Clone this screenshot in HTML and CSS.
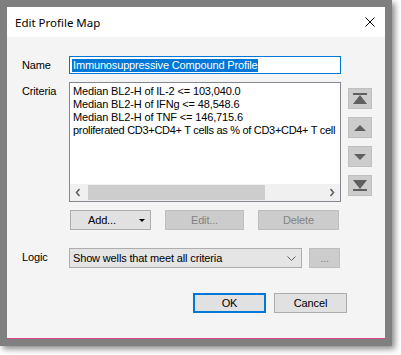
FILE: index.html
```html
<html lang="en">
<head>
    <meta charset="UTF-8">
    <meta name="viewport" content="width=device-width, initial-scale=1.0">
    <title>Edit Profile Map</title>
    <link rel="stylesheet" href="styles.css">
</head>
<body>
    <div class="frame">
        <div class="dialog">
            <div class="titlebar">
                <span class="title">Edit Profile Map</span>
                <svg class="close" width="10" height="10" viewBox="0 0 10 10">
                    <path d="M0.5 0.5 L9.5 9.5 M9.5 0.5 L0.5 9.5" stroke="#000" stroke-width="1" fill="none"/>
                </svg>
            </div>

            <div class="content">
                <div class="row row-name">
                    <span class="label">Name</span>
                    <div class="textbox">
                        <span class="selected">Immunosuppressive Compound Profile</span>
                    </div>
                </div>

                <div class="row row-criteria">
                    <span class="label">Criteria</span>
                    <div class="listbox">
                        <div class="items">
                            <div class="item">Median BL2-H of IL-2 &lt;= 103,040.0</div>
                            <div class="item">Median BL2-H of IFNg &lt;= 48,548.6</div>
                            <div class="item">Median BL2-H of TNF &lt;= 146,715.6</div>
                            <div class="item item-long">proliferated CD3+CD4+ T cells as % of CD3+CD4+ T cell</div>
                        </div>
                        <div class="hscroll">
                            <span class="sb-arrow">
                                <svg width="17" height="17" viewBox="0 0 17 17">
                                    <path d="M9.5 5 L6.5 8.5 L9.5 12" stroke="#606060" stroke-width="1.6" fill="none"/>
                                </svg>
                            </span>
                            <span class="sb-track"><span class="sb-thumb"></span></span>
                            <span class="sb-arrow">
                                <svg width="17" height="17" viewBox="0 0 17 17">
                                    <path d="M7.5 5 L10.5 8.5 L7.5 12" stroke="#606060" stroke-width="1.6" fill="none"/>
                                </svg>
                            </span>
                        </div>
                    </div>
                    <div class="move-buttons">
                        <button class="move-btn">
                            <svg width="14" height="11" viewBox="0 0 14 11">
                                <rect x="0" y="0" width="14" height="2" fill="#5f5f5f"/>
                                <path d="M7 2 L14 11 L0 11 Z" fill="#5f5f5f"/>
                            </svg>
                        </button>
                        <button class="move-btn">
                            <svg width="12" height="6" viewBox="0 0 12 6">
                                <path d="M6 0 L12 6 L0 6 Z" fill="#5f5f5f"/>
                            </svg>
                        </button>
                        <button class="move-btn">
                            <svg width="12" height="6" viewBox="0 0 12 6">
                                <path d="M0 0 L12 0 L6 6 Z" fill="#5f5f5f"/>
                            </svg>
                        </button>
                        <button class="move-btn">
                            <svg width="14" height="11" viewBox="0 0 14 11">
                                <path d="M0 0 L14 0 L7 9 Z" fill="#5f5f5f"/>
                                <rect x="0" y="9" width="14" height="2" fill="#5f5f5f"/>
                            </svg>
                        </button>
                    </div>
                </div>

                <div class="row row-actions">
                    <button class="btn btn-add">
                        <span class="btn-text">Add...</span>
                        <svg class="drop" width="6" height="3" viewBox="0 0 6 3">
                            <path d="M0 0 L6 0 L3 3 Z" fill="#000"/>
                        </svg>
                    </button>
                    <button class="btn btn-edit disabled">Edit...</button>
                    <button class="btn btn-delete disabled">Delete</button>
                </div>

                <div class="row row-logic">
                    <span class="label">Logic</span>
                    <div class="combo">
                        <span class="combo-text">Show wells that meet all criteria</span>
                        <svg class="chevron" width="9" height="5" viewBox="0 0 9 5">
                            <path d="M0.5 0.5 L4.5 4.5 L8.5 0.5" stroke="#606060" stroke-width="1" fill="none"/>
                        </svg>
                    </div>
                    <button class="btn btn-more disabled">...</button>
                </div>

                <div class="row row-footer">
                    <button class="btn btn-ok">OK</button>
                    <button class="btn btn-cancel">Cancel</button>
                </div>
            </div>
        </div>
    </div>
</body>
</html>
```

FILE: styles.css
```css
* {
    margin: 0;
    padding: 0;
    box-sizing: border-box;
}

body {
    background-color: #ffffff;
    font-family: "Liberation Sans", Arial, sans-serif;
    font-size: 11px;
    color: #000;
}

.frame {
    width: 392px;
    height: 346px;
    padding: 7px;
    background-color: #7f7f7f;
    box-shadow: 3px 3px 6px rgba(110, 110, 110, 0.8);
}

.dialog {
    width: 378px;
    height: 332px;
    display: flex;
    flex-direction: column;
}

.titlebar {
    height: 30px;
    background: #ffffff;
    display: flex;
    align-items: center;
    justify-content: space-between;
    padding: 0 10px 0 8px;
}

.title {
    font-family: "Noto Sans", "Segoe UI", sans-serif;
    font-size: 11.5px;
    color: #000;
}

.content {
    flex: 1;
    background: #f4f4f4;
    border-bottom: 1px solid #d9468b;
    padding: 19px 0 0 15px;
}

.row {
    display: flex;
    align-items: flex-start;
}

.label {
    width: 47px;
    line-height: 13px;
    letter-spacing: -0.15px;
}

/* name */
.row-name .label {
    padding-top: 3px;
}

.textbox {
    width: 272px;
    height: 18px;
    background: #fff;
    border: 1px solid #0078d7;
    padding: 2px 0 0 2px;
}

.selected {
    display: inline-block;
    background: #0078d7;
    color: #fff;
    line-height: 13px;
    padding: 0 1px;
    letter-spacing: -0.15px;
}

/* criteria */
.row-criteria {
    margin-top: 8px;
}

.row-criteria .label {
    padding-top: 3px;
}

.listbox {
    width: 272px;
    height: 120px;
    background: #fff;
    border: 1px solid #828790;
    display: flex;
    flex-direction: column;
}

.items {
    flex: 1;
    padding: 2px 0 0 3px;
    overflow: hidden;
}

.item {
    line-height: 13px;
    white-space: nowrap;
    letter-spacing: -0.15px;
}

.item-long {
    letter-spacing: -0.3px;
}

.hscroll {
    height: 17px;
    background: #f0f0f0;
    display: flex;
}

.sb-arrow {
    width: 17px;
    height: 17px;
    display: flex;
}

.sb-track {
    flex: 1;
    padding: 1px 0 1px 1px;
    display: flex;
}

.sb-thumb {
    width: 177px;
    background: #cdcdcd;
}

.move-buttons {
    margin-left: 7px;
    padding-top: 6px;
    display: flex;
    flex-direction: column;
    gap: 8px;
}

.move-btn {
    width: 24px;
    height: 21px;
    background: #cccccc;
    border: 1px solid #bfbfbf;
    display: flex;
    align-items: center;
    justify-content: center;
}

/* buttons */
.btn {
    height: 20px;
    background: #e1e1e1;
    border: 1px solid #adadad;
    font-family: "Liberation Sans", Arial, sans-serif;
    font-size: 11px;
    letter-spacing: -0.15px;
    color: #000;
    display: flex;
    align-items: center;
    justify-content: center;
}

.btn.disabled {
    background: #cccccc;
    border-color: #bfbfbf;
    color: #838383;
}

.row-actions {
    margin-top: 8px;
    padding-left: 48px;
    gap: 14px;
}

.btn-add {
    width: 81px;
    justify-content: flex-start;
    padding-left: 17px;
}

.btn-add .drop {
    margin-left: auto;
    margin-right: 5px;
}

.btn-edit {
    width: 79px;
}

.btn-delete {
    width: 81px;
}

/* logic */
.row-logic {
    margin-top: 18px;
}

.row-logic .label {
    padding-top: 3px;
}

.combo {
    width: 233px;
    height: 20px;
    background: #e5e5e5;
    border: 1px solid #adadad;
    display: flex;
    align-items: center;
    padding-left: 3px;
    letter-spacing: -0.15px;
}

.chevron {
    margin-left: auto;
    margin-right: 5px;
}

.btn-more {
    width: 31px;
    margin-left: 7px;
}

/* footer */
.row-footer {
    margin-top: 25px;
    padding-left: 171px;
    gap: 8px;
}

.btn-ok {
    width: 73px;
    border: 2px solid #0078d7;
}

.btn-cancel {
    width: 73px;
}
```
